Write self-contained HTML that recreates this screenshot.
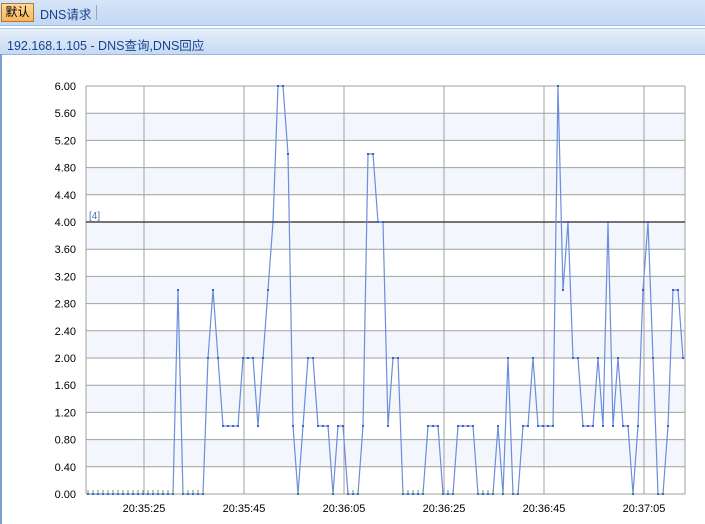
<!DOCTYPE html>
<html><head><meta charset="utf-8"><style>
body{margin:0;width:705px;height:524px;overflow:hidden;background:#fff;font-family:"Liberation Sans","Noto Sans CJK SC",sans-serif;}
.top{position:absolute;left:0;top:0;width:705px;height:25px;background:linear-gradient(#d6e5f8,#c3d8f3);border-bottom:1px solid #9ebbe3;}
.btn{position:absolute;left:1px;top:3px;width:31px;height:17px;background:linear-gradient(#ffd89a,#f9b45a);border:1px solid #b27a2a;font-size:12px;line-height:17px;text-align:center;color:#000;}
.t2{position:absolute;left:40px;top:4px;font-size:12.5px;color:#15428b;}
.sep{position:absolute;left:96px;top:5px;width:1px;height:15px;background:#8aa8d0;}
.bar{position:absolute;left:0;top:28px;width:705px;height:25px;background:linear-gradient(#e6effb,#c7daf3);border-bottom:1px solid #99b4dc;border-top:1px solid #b5cbea;}
.bar span{position:absolute;left:7px;top:6px;font-size:12.5px;color:#15428b;}
.lb{position:absolute;left:0;top:54px;width:2px;height:470px;background:#7d9fd0;}
svg{position:absolute;left:0;top:0}
</style></head><body>
<div class="top"><div class="btn">默认</div><div class="t2">DNS请求</div><div class="sep"></div></div>
<div class="bar"><span>192.168.1.105 - DNS查询,DNS回应</span></div>
<div class="lb"></div>
<svg id="s" width="705" height="524" font-family="Liberation Sans, sans-serif" font-size="11"></svg>
<script>
var s=document.getElementById('s'),h='';
var X0=86,X1=685,Y0=494,K=68;
function y(v){return Y0-v*K;}
[[5.6,5.2],[4.8,4.4],[4.0,3.6],[3.2,2.8],[2.4,2.0],[1.6,1.2],[0.8,0.4]].forEach(function(b){h+='<rect x="'+X0+'" y="'+y(b[0])+'" width="'+(X1-X0)+'" height="'+(b[0]-b[1])*K+'" fill="#f3f7fd"/>';});
for(var i=0;i<=15;i++){var v=i*0.4,yy=y(v);h+='<line x1="'+X0+'" x2="'+X1+'" y1="'+yy+'" y2="'+yy+'" stroke="#a0a0a0"/>';h+='<text x="76" y="'+(yy+4)+'" text-anchor="end" fill="#000">'+v.toFixed(2)+'</text>';}
h+='<line x1="'+X0+'" x2="'+X0+'" y1="86" y2="494" stroke="#a0a0a0"/><line x1="'+X1+'" x2="'+X1+'" y1="86" y2="494" stroke="#a0a0a0"/>';
var lab=['20:35:25','20:35:45','20:36:05','20:36:25','20:36:45','20:37:05'];
for(var j=0;j<6;j++){var xx=144+100*j;h+='<line x1="'+xx+'" x2="'+xx+'" y1="86" y2="494" stroke="#a0a0a0"/><text x="'+xx+'" y="512" text-anchor="middle">'+lab[j]+'</text>';}
h+='<line x1="'+X0+'" x2="'+X1+'" y1="'+y(4)+'" y2="'+y(4)+'" stroke="#504048" stroke-width="1.5"/><text x="89" y="219" fill="#4a6fb0" font-size="10">[4]</text>';
var d={178:3,208:2,213:3,218:2,223:1,228:1,233:1,238:1,243:2,248:2,253:2,258:1,263:2,268:3,273:4,278:6,283:6,288:5,293:1,303:1,308:2,313:2,318:1,323:1,328:1,338:1,343:1,363:1,368:5,373:5,378:4,383:4,388:1,393:2,398:2,428:1,433:1,438:1,458:1,463:1,468:1,473:1,498:1,508:2,523:1,528:1,533:2,538:1,543:1,548:1,553:1,558:6,563:3,568:4,573:2,578:2,583:1,588:1,593:1,598:2,603:1,608:4,613:1,618:2,623:1,628:1,638:1,643:3,648:4,653:2,668:1,673:3,678:3,683:2};
var pts=[],mk='';
for(var x=88;x<=685;x+=5){var v=d[x]||0;pts.push(x+','+y(v));mk+='<rect x="'+(x-1)+'" y="'+(y(v)-1)+'" width="2" height="2" fill="#3a62c0"/>';if(!v)mk+='<line x1="'+x+'" x2="'+x+'" y1="490" y2="494" stroke="#6aa06a"/>';}
h+='<polyline points="'+pts.join(' ')+'" fill="none" stroke="#6a8edc" stroke-width="1.2"/>'+mk;
s.innerHTML=h;
</script>
</body></html>
